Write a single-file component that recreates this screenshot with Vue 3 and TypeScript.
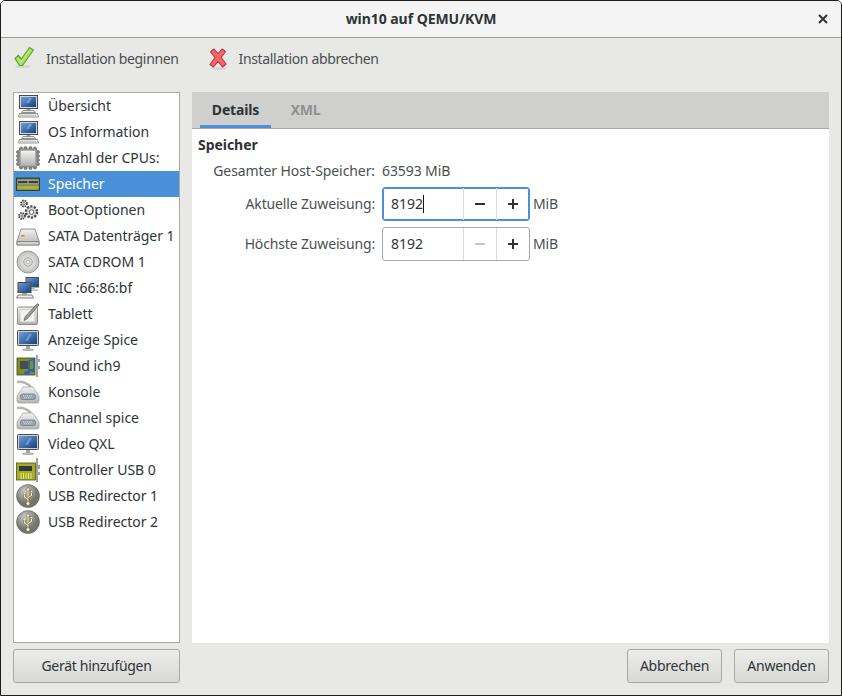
<script setup lang="ts">
interface Row { label: string; icon: string; active?: boolean }
const rows: Row[] = [
  { label: 'Übersicht', icon: 'pc' },
  { label: 'OS Information', icon: 'pc' },
  { label: 'Anzahl der CPUs:', icon: 'cpu' },
  { label: 'Speicher', icon: 'ram', active: true },
  { label: 'Boot-Optionen', icon: 'gears' },
  { label: 'SATA Datenträger 1', icon: 'hdd' },
  { label: 'SATA CDROM 1', icon: 'cd' },
  { label: 'NIC :66:86:bf', icon: 'nic' },
  { label: 'Tablett', icon: 'tablet' },
  { label: 'Anzeige Spice', icon: 'monitor' },
  { label: 'Sound ich9', icon: 'sound' },
  { label: 'Konsole', icon: 'serial' },
  { label: 'Channel spice', icon: 'serial' },
  { label: 'Video QXL', icon: 'monitor' },
  { label: 'Controller USB 0', icon: 'card' },
  { label: 'USB Redirector 1', icon: 'usb' },
  { label: 'USB Redirector 2', icon: 'usb' },
]
</script>

<template>
  <div class="window">
    <svg class="defs" aria-hidden="true">
      <defs>
        <linearGradient id="scr" x1="0" y1="0" x2="1" y2="1"><stop offset="0" stop-color="#6f9fd8"/><stop offset="1" stop-color="#123f80"/></linearGradient>
        <linearGradient id="metal" x1="0" y1="0" x2="0" y2="1"><stop offset="0" stop-color="#f2f2f0"/><stop offset="1" stop-color="#b4b6b1"/></linearGradient>
        <radialGradient id="disc"><stop offset="0" stop-color="#fafafa"/><stop offset="1" stop-color="#bcbebb"/></radialGradient>
        <radialGradient id="ball" cx=".4" cy=".3"><stop offset="0" stop-color="#d4d4d0"/><stop offset="1" stop-color="#74756f"/></radialGradient>
        <symbol id="pc" viewBox="0 0 24 24">
          <rect x="3.5" y="1.5" width="18" height="13" fill="#d6d8d3" stroke="#4a4c49"/>
          <rect x="5" y="3" width="15" height="10" fill="url(#scr)"/>
          <path d="M10 9l3-5h3l-3 5z" fill="#8eb5e4" opacity=".6"/>
          <rect x="10.500" y="15" width="4" height="1.500" fill="#9a9c98"/>
          <path d="M7 16.500h11l1.500 2H5.500z" fill="#e8e8e5" stroke="#666864" stroke-width=".7"/>
          <path d="M3.500 19.500h18l1 3.500H2.500z" fill="#f0f0ee" stroke="#666864" stroke-width=".7"/>
          <path d="M4.500 21.200h16" stroke="#8d8f8b" stroke-width=".8" stroke-dasharray="1 .6"/>
        </symbol>
        <symbol id="monitor" viewBox="0 0 24 24">
          <rect x="1.500" y="2.500" width="21" height="15" rx="1" fill="#cfd1cd" stroke="#4a4c49"/>
          <rect x="3" y="4" width="18" height="12" fill="url(#scr)"/>
          <path d="M9 13l4-7h3l-4 7z" fill="#8eb5e4" opacity=".55"/>
          <path d="M10 18h4v3h-4z" fill="#a8aaa6"/>
          <path d="M7 21h10v1.500H7z" fill="#d8d9d6" stroke="#777" stroke-width=".5"/>
        </symbol>
        <symbol id="cpu" viewBox="0 0 24 24">
          <g fill="#8a8b87" stroke="#4e4f4c" stroke-width=".5">
            <circle cx="5" cy="2.500" r="1.600"/><circle cx="9.500" cy="2" r="1.600"/><circle cx="14.500" cy="2" r="1.600"/><circle cx="19" cy="2.500" r="1.600"/>
            <circle cx="5" cy="21.500" r="1.600"/><circle cx="9.500" cy="22" r="1.600"/><circle cx="14.500" cy="22" r="1.600"/><circle cx="19" cy="21.500" r="1.600"/>
            <circle cx="2" cy="6" r="1.600"/><circle cx="2" cy="10" r="1.600"/><circle cx="2" cy="14" r="1.600"/><circle cx="2" cy="18" r="1.600"/>
            <circle cx="22" cy="6" r="1.600"/><circle cx="22" cy="10" r="1.600"/><circle cx="22" cy="14" r="1.600"/><circle cx="22" cy="18" r="1.600"/>
          </g>
          <rect x="3" y="3" width="18" height="18" rx="2" fill="#a1a29e" stroke="#6a6b68" stroke-width=".6"/>
          <rect x="4.800" y="4.800" width="14.400" height="14.400" rx="1" fill="url(#metal)"/>
        </symbol>
        <symbol id="ram" viewBox="0 0 24 24">
          <rect x=".5" y="6" width="23" height="12.500" fill="#55623f" stroke="#2b3322" stroke-width=".8"/>
          <rect x="1.500" y="7.500" width="21" height="5" fill="#b9bcb0"/>
          <rect x="2" y="8.800" width="9.500" height="2.500" fill="#3b4033"/>
          <rect x="12.500" y="8.800" width="9.500" height="2.500" fill="#3b4033"/>
          <rect x="1.500" y="13.500" width="21" height="4" fill="#c3cb4a"/>
          <path d="M3 13.500v4M5 13.500v4M7 13.500v4M9 13.500v4M11 13.500v4M13 13.500v4M15 13.500v4M17 13.500v4M19 13.500v4M21 13.500v4" stroke="#76812a" stroke-width=".7"/>
        </symbol>
        <symbol id="gears" viewBox="0 0 24 24">
          <g stroke="#4b4c4a">
            <circle cx="15.500" cy="14" r="5.600" stroke-dasharray="2.200 1.300" stroke-width="2.400" fill="#dcdcd9"/>
            <circle cx="15.500" cy="14" r="2.300" fill="#fff" stroke-width=".9"/>
            <circle cx="8" cy="5.500" r="3" stroke-dasharray="1.500 .9" stroke-width="1.800" fill="#e2e2df"/>
            <circle cx="8" cy="5.500" r="1.100" fill="#fff" stroke-width=".7"/>
            <circle cx="6" cy="18" r="3" stroke-dasharray="1.500 .9" stroke-width="1.800" fill="#e2e2df"/>
            <circle cx="6" cy="18" r="1.100" fill="#fff" stroke-width=".7"/>
          </g>
        </symbol>
        <symbol id="hdd" viewBox="0 0 24 24">
          <path d="M5 5h14l4 12v4H1v-4z" fill="url(#metal)" stroke="#7b7d79" stroke-width=".8"/>
          <path d="M1 17.500h22V21H1z" fill="#d0d1cd" stroke="#7b7d79" stroke-width=".8"/>
          <rect x="5" y="11" width="3.500" height="1.600" fill="#e08436"/>
        </symbol>
        <symbol id="cd" viewBox="0 0 24 24">
          <circle cx="12" cy="12" r="11" fill="url(#disc)" stroke="#8d8f8b" stroke-width=".8"/>
          <circle cx="12" cy="12" r="4.200" fill="#e2e2df" stroke="#8d8f8b" stroke-width=".8"/>
          <circle cx="12" cy="12" r="1.800" fill="#fff" stroke="#8d8f8b" stroke-width=".6"/>
        </symbol>
        <symbol id="nic" viewBox="0 0 24 24">
          <rect x="10" y="1.500" width="12.500" height="9.500" fill="url(#scr)" stroke="#4c4e4b"/>
          <path d="M14 11.500h5v1.500h-5zM13 13.500h9v1.500h-9z" fill="#b7b9b5"/>
          <rect x="2" y="6.500" width="13" height="10" fill="url(#scr)" stroke="#4c4e4b"/>
          <path d="M6 17h5v1.500H6z" fill="#9a9c98"/>
          <path d="M2 19h14l1.500 3H.5z" fill="#ecece9" stroke="#666864" stroke-width=".8"/>
        </symbol>
        <symbol id="tablet" viewBox="0 0 24 24">
          <rect x="1.500" y="5" width="20" height="17.500" rx="1.500" fill="url(#metal)" stroke="#8a8c88"/>
          <rect x="4" y="7.500" width="15" height="12.500" fill="#f1f1ef" stroke="#b6b8b4" stroke-width=".6"/>
          <path d="M21.500 1.500l1.500 1.500L11 17l-3 1.500L9 15z" fill="#9a9c97" stroke="#5a5b58" stroke-width=".7"/>
        </symbol>
        <symbol id="sound" viewBox="0 0 24 24">
          <rect x="1" y="4" width="18" height="17" fill="#7e8f2a" stroke="#3e4715" stroke-width=".8"/>
          <path d="M20 1h2v22h-2zM22 5h2v3h-2zM22 12h2v3h-2z" fill="#a4a6a2"/>
          <rect x="4" y="7" width="8" height="8" fill="#4a4d4e"/>
          <path d="M13 19V7l5-2v11" fill="none" stroke="#2d63b5" stroke-width="1.800"/>
          <ellipse cx="11" cy="19" rx="3" ry="2" fill="#2d63b5"/>
          <ellipse cx="16" cy="16.500" rx="2.600" ry="1.800" fill="#2d63b5"/>
        </symbol>
        <symbol id="serial" viewBox="0 0 24 24">
          <path d="M1 2c6-1 10 1 14 5" fill="none" stroke="#b4b6b2" stroke-width="2.600"/>
          <path d="M7 7h10l6 9v5a2 2 0 0 1-2 2H3a2 2 0 0 1-2-2v-5z" fill="url(#metal)" stroke="#9c9e9a" stroke-width=".7"/>
          <rect x="4.500" y="14" width="15" height="5.500" rx="2" fill="#9aa3b2" stroke="#667084" stroke-width=".7"/>
          <path d="M7 15.800h10M8 17.800h8" stroke="#e4e6ea" stroke-width=".9" stroke-dasharray="1 1"/>
        </symbol>
        <symbol id="card" viewBox="0 0 24 24">
          <rect x=".5" y="5" width="19" height="17" fill="#a3ad2a" stroke="#4c5212" stroke-width=".8"/>
          <path d="M20 0h2v24h-2zM22 7h2v4h-2zM22 14h2v3h-2z" fill="#9fa19d"/>
          <rect x="3" y="8" width="13" height="5" fill="#33383a"/>
          <path d="M5 15v6M7.500 15v6M10 15v6M12.500 15v6M15 15v6" stroke="#e3e77a" stroke-width="1"/>
        </symbol>
        <symbol id="usb" viewBox="0 0 24 24">
          <circle cx="12" cy="12" r="11.500" fill="url(#ball)" stroke="#66675f" stroke-width=".6"/>
          <path d="M12 3l2.200 3.200h-1.300v12.300h-1.800V6.200H9.800z" fill="#f4efc6" stroke="#56502a" stroke-width=".5"/>
          <path d="M12 15.500l-3.500-2.500V10M12 13.500l3.500-2V8.500" fill="none" stroke="#56502a" stroke-width="2"/>
          <path d="M12 15.500l-3.500-2.500V10M12 13.500l3.500-2V8.500" fill="none" stroke="#f4efc6" stroke-width="1.200"/>
          <circle cx="12" cy="19.500" r="1.900" fill="#f4efc6" stroke="#56502a" stroke-width=".5"/>
          <circle cx="8.500" cy="9.500" r="1.400" fill="#f4efc6" stroke="#56502a" stroke-width=".4"/>
          <rect x="14.300" y="6.300" width="2.400" height="2.400" fill="#f4efc6" stroke="#56502a" stroke-width=".4"/>
        </symbol>
      </defs>
    </svg>

    <header class="titlebar">
      <span class="title">win10 auf QEMU/KVM</span>
      <svg class="close" viewBox="0 0 10 10" width="10" height="10"><path d="M1 1l8 8M9 1l-8 8" stroke="#2e3436" stroke-width="2"/></svg>
    </header>

    <div class="toolbar">
      <div class="tool">
        <svg class="tool-icon" viewBox="0 0 22 24" width="22" height="24">
          <ellipse cx="10" cy="21.500" rx="8" ry="1.300" fill="#d2d2cf"/>
          <path d="M2 13.500l3.300-3 3 3.500L16.500 2.500 20.500 5 9.500 20.500h-3z" fill="#a6e05c" stroke="#62a52a" stroke-width="1.200" stroke-linejoin="round"/>
          <path d="M4.500 13.500l3.700 3.500L17 5" fill="none" stroke="#c7f08e" stroke-width="1"/>
        </svg>
        <span class="tl">Installation beginnen</span>
      </div>
      <div class="tool">
        <svg class="tool-icon x" viewBox="0 0 18 24" width="18" height="24">
          <ellipse cx="9" cy="21.500" rx="8" ry="1.300" fill="#d2d2cf"/>
          <path d="M1.500 5l3.500-3 4 4.500L13 2l3.500 2.500-4.300 6 4.800 6.500-3.500 3-4.500-5.500-4.500 5.500L1 17.500l5-7z" fill="#f2686a" stroke="#c23338" stroke-width="1.100" stroke-linejoin="round"/>
        </svg>
        <span class="tl">Installation abbrechen</span>
      </div>
    </div>

    <main class="main">
      <ul class="list">
        <li v-for="r in rows" :key="r.label" class="row" :class="{ active: r.active }">
          <svg class="row-icon" width="24" height="24"><use :href="'#' + r.icon" /></svg>
          <span class="row-text">{{ r.label }}</span>
        </li>
      </ul>

      <section class="panel">
        <div class="tabs">
          <div class="tab on">Details</div>
          <div class="tab off">XML</div>
        </div>
        <div class="body">
          <h2>Speicher</h2>
          <div class="form">
            <div class="lbl total">Gesamter Host-Speicher:</div>
            <div class="val total">63593 MiB</div>
            <div class="lbl">Aktuelle Zuweisung:</div>
            <div class="val">
              <div class="spin focus">
                <div class="entry">8192<i class="caret"></i></div>
                <div class="sb"><svg viewBox="0 0 12 12" width="12" height="12"><path d="M1 6h10" stroke="#2e3436" stroke-width="2"/></svg></div>
                <div class="sb"><svg viewBox="0 0 12 12" width="12" height="12"><path d="M1 6h10M6 1v10" stroke="#2e3436" stroke-width="2"/></svg></div>
              </div>
              <span class="unit">MiB</span>
            </div>
            <div class="lbl">Höchste Zuweisung:</div>
            <div class="val">
              <div class="spin">
                <div class="entry">8192</div>
                <div class="sb"><svg viewBox="0 0 12 12" width="12" height="12"><path d="M1 6h10" stroke="#c9c9c7" stroke-width="2"/></svg></div>
                <div class="sb"><svg viewBox="0 0 12 12" width="12" height="12"><path d="M1 6h10M6 1v10" stroke="#2e3436" stroke-width="2"/></svg></div>
              </div>
              <span class="unit">MiB</span>
            </div>
          </div>
        </div>
      </section>
    </main>

    <footer class="footer">
      <button class="btn add">Gerät hinzufügen</button>
      <div class="right">
        <button class="btn">Abbrechen</button>
        <button class="btn">Anwenden</button>
      </div>
    </footer>
  </div>
</template>

<style>
html, body { margin: 0; background: #fff; }
</style>

<style scoped>
.window {
  width: 842px; height: 696px; box-sizing: border-box;
  border: 1px solid #1c1c1c; border-top-left-radius: 5px; border-top-right-radius: 5px;
  background: #e8e8e7; overflow: hidden;
  display: flex; flex-direction: column;
  font-family: "Noto Sans", sans-serif; font-size: 14px; color: #2e3436;
}
.defs { position: absolute; width: 0; height: 0; }
.titlebar {
  height: 37px; flex: none; box-sizing: border-box; background: #f4f4f4;
  border-bottom: 1px solid #9a9a98; display: flex; align-items: center; justify-content: center;
  position: relative;
}
.title { font-weight: 700; font-size: 14px; color: #2e3436; padding-bottom: 1px; letter-spacing: -.05px; }
.close { position: absolute; right: 13px; top: 13px; }
.toolbar { height: 54px; flex: none; display: flex; align-items: center; padding: 0 0 13px 12px; box-sizing: border-box; color: #4a4f50; }
.tool { display: flex; align-items: center; }
.tl { letter-spacing: -.36px; }
.tool-icon { margin-right: 11px; margin-bottom: 3px; }
.tool-icon.x { margin-right: 12px; margin-bottom: 0; margin-top: 1px; }
.tool:first-child { margin-right: 30px; }
.main { flex: 1; min-height: 0; display: flex; gap: 12px; padding: 0 12px; }
.list {
  list-style: none; margin: 0; padding: 0; width: 167px; box-sizing: border-box;
  border: 1px solid #a9a9a7; background: #fff; flex: none;
}
.row { height: 26px; display: flex; align-items: center; padding-left: 2px; gap: 8px; white-space: nowrap; color: #2e3436; }
.row-text { padding-bottom: 2px; letter-spacing: -.03px; }
.row.active { background: #4a90d9; color: #fff; }
.row-icon { flex: none; }
.panel { flex: 1; background: #fff; display: flex; flex-direction: column; }
.tabs {
  height: 37px; flex: none; box-sizing: border-box; background: #cfcfcd; border-bottom: 1px solid #a8a8a6;
  display: flex; padding-left: 8px;
}
.tab { height: 36px; width: 71px; box-sizing: border-box; font-weight: 700; display: flex; align-items: center; justify-content: center; letter-spacing: -.15px; }
.tab.on { border-bottom: 3px solid #4a90d9; padding-top: 1px; color: #2e3436; }
.tab.off { padding: 0 2px 1px 0; letter-spacing: -.3px; color: #8f9190; }
.body { padding: 6px; }
h2 { margin: 0; font-size: 14px; font-weight: 700; height: 20px; line-height: 20px; color: #2e3436; padding-bottom: 1px; box-sizing: border-box; letter-spacing: -.05px; }
.form {
  display: grid; grid-template-columns: 177px auto; column-gap: 7px; row-gap: 6px;
  align-items: center; justify-content: start; margin-top: 6px;
}
.lbl { text-align: right; color: #4a4f50; white-space: nowrap; letter-spacing: -.15px; padding-bottom: 2px; }
.val { display: flex; align-items: center; gap: 3px; color: #4a4f50; }
.unit { letter-spacing: -.2px; padding-bottom: 1px; }
.lbl.total, .val.total { height: 20px; line-height: 20px; padding-bottom: 0; }
.lbl.total { letter-spacing: -.09px; }
.val.total { letter-spacing: -.1px; }
.spin {
  width: 148px; height: 34px; box-sizing: border-box; border: 1px solid #a7a7a5; border-radius: 3px;
  display: flex; background: #fff;
}
.spin.focus { border-color: #4a90d9; box-shadow: inset 0 0 0 1px #4a90d9; }
.entry { width: 80px; box-sizing: border-box; padding: 0 0 1px 8px; display: flex; align-items: center; color: #2e3436; }
.caret { display: inline-block; width: 1px; height: 18px; background: #111; }
.sb { width: 33px; flex: 1; display: flex; align-items: center; justify-content: center; border-left: 1px solid #dcdcda; }
.footer { height: 52px; flex: none; box-sizing: border-box; padding: 6px 12px 12px; display: flex; justify-content: space-between; }
.right { display: flex; gap: 12px; }
.btn {
  width: 95px; height: 34px; box-sizing: border-box; border: 1px solid #a9a9a7; border-radius: 3px;
  background: linear-gradient(#ececeb, #d8d8d6); font: inherit; color: #2e3436; padding: 0 0 2px; letter-spacing: -.25px;
}
.btn.add { width: 167px; letter-spacing: -.3px; }
</style>
